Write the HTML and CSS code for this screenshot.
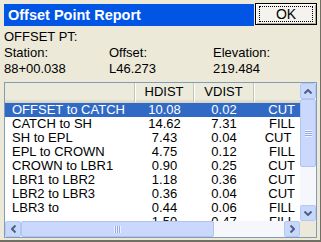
FILE: index.html
```html
<!DOCTYPE html>
<html lang="en">

<head>
    <meta charset="UTF-8">
    <title>Offset Point Report</title>
    <link rel="stylesheet" href="styles.css">
</head>

<body>
    <div class="dialog">
        <div class="top">
            <div class="title">Offset Point Report</div>
            <div class="ok-btn"><span class="focus">OK</span></div>
        </div>
        <div class="info">
            <div class="info-head">OFFSET PT:</div>
            <div>Station:</div>
            <div>Offset:</div>
            <div>Elevation:</div>
            <div>88+00.038</div>
            <div>L46.273</div>
            <div>219.484</div>
        </div>
        <div class="list">
            <div class="view">
                <div class="row head">
                    <div class="cell"></div>
                    <div class="cell">HDIST</div>
                    <div class="cell">VDIST</div>
                    <div class="cell"></div>
                </div>
                <div class="row selected">
                    <div class="cell name">OFFSET to CATCH</div>
                    <div class="cell">10.08</div>
                    <div class="cell">0.02</div>
                    <div class="cell kind">CUT</div>
                </div>
                <div class="row">
                    <div class="cell name">CATCH to SH</div>
                    <div class="cell">14.62</div>
                    <div class="cell">7.31</div>
                    <div class="cell kind">FILL</div>
                </div>
                <div class="row">
                    <div class="cell name">SH to EPL</div>
                    <div class="cell">7.43</div>
                    <div class="cell">0.04</div>
                    <div class="cell kind">CUT&nbsp;</div>
                </div>
                <div class="row">
                    <div class="cell name">EPL to CROWN</div>
                    <div class="cell">4.75</div>
                    <div class="cell">0.12</div>
                    <div class="cell kind">FILL</div>
                </div>
                <div class="row">
                    <div class="cell name">CROWN to LBR1</div>
                    <div class="cell">0.90</div>
                    <div class="cell">0.25</div>
                    <div class="cell kind">CUT</div>
                </div>
                <div class="row">
                    <div class="cell name">LBR1 to LBR2</div>
                    <div class="cell">1.18</div>
                    <div class="cell">0.36</div>
                    <div class="cell kind">CUT</div>
                </div>
                <div class="row">
                    <div class="cell name">LBR2 to LBR3</div>
                    <div class="cell">0.36</div>
                    <div class="cell">0.04</div>
                    <div class="cell kind">CUT</div>
                </div>
                <div class="row">
                    <div class="cell name">LBR3 to</div>
                    <div class="cell">0.44</div>
                    <div class="cell">0.06</div>
                    <div class="cell kind">FILL</div>
                </div>
                <div class="row">
                    <div class="cell name">.</div>
                    <div class="cell">1.50</div>
                    <div class="cell">0.47</div>
                    <div class="cell kind">FILL</div>
                </div>
            </div>
            <div class="vscroll">
                <div class="sbtn">
                    <svg width="8" height="5" viewBox="0 0 8 5"><path d="M0.5 4.5 L4 1 L7.5 4.5" fill="none" stroke="#4d6185" stroke-width="2"/></svg>
                </div>
                <div class="vthumb"><div class="grip-v"></div></div>
                <div class="vtrack"></div>
                <div class="sbtn">
                    <svg width="8" height="5" viewBox="0 0 8 5"><path d="M0.5 0.5 L4 4 L7.5 0.5" fill="none" stroke="#4d6185" stroke-width="2"/></svg>
                </div>
            </div>
            <div class="hscroll">
                <div class="sbtn">
                    <svg width="5" height="8" viewBox="0 0 5 8"><path d="M4.5 0.5 L1 4 L4.5 7.5" fill="none" stroke="#4d6185" stroke-width="2"/></svg>
                </div>
                <div class="hthumb"><div class="grip-h"></div></div>
                <div class="htrack"></div>
                <div class="sbtn">
                    <svg width="5" height="8" viewBox="0 0 5 8"><path d="M0.5 0.5 L4 4 L0.5 7.5" fill="none" stroke="#4d6185" stroke-width="2"/></svg>
                </div>
            </div>
            <div class="corner"></div>
        </div>
    </div>
</body>

</html>
```

FILE: styles.css
```css
* {
    box-sizing: border-box;
}

body {
    margin: 0;
    font-family: "Liberation Sans", Arial, sans-serif;
    font-size: 13px;
    color: #000;
}

.dialog {
    width: 321px;
    height: 242px;
    background: #ece9d8;
    border-right: 1px solid #716f64;
    border-bottom: 2px solid #716f64;
    padding: 3px 3px 0 4px;
    overflow: hidden;
}

.top {
    display: flex;
    gap: 1px;
}

.title {
    flex: 1;
    height: 22px;
    margin-top: 1px;
    padding-left: 4px;
    background: #0055e5;
    color: #fff;
    font-weight: bold;
    font-size: 14.5px;
    line-height: 22px;
}

.ok-btn {
    width: 62px;
    height: 22px;
    border: 1px solid #000;
    background: #f4f3ee;
    box-shadow: inset 1px 1px 0 #fff, inset -1px -1px 0 #aca899;
    padding: 2px 3px;
}

.focus {
    display: block;
    height: 100%;
    border: 1px dotted #000;
    text-align: center;
    font-size: 14px;
    line-height: 15px;
}

.info {
    display: grid;
    grid-template-columns: 105px 104px 1fr;
    line-height: 16px;
    margin-top: 3px;
}

.info-head {
    grid-column: 1 / 4;
}

.list {
    margin-top: 5px;
    width: 313px;
    height: 156px;
    border: 1px solid #7f9db9;
    background: #fff;
    display: grid;
    grid-template-columns: 1fr 16px;
    grid-template-rows: 1fr 16px;
}

.view {
    overflow: hidden;
}

.row {
    display: grid;
    grid-template-columns: 130px 59px 60px 47px;
    height: 14px;
    line-height: 14px;
    white-space: nowrap;
}

.row .cell {
    text-align: center;
    overflow: hidden;
}

.row .name {
    text-align: left;
    padding-left: 7px;
}

.row .kind {
    text-align: right;
    padding-right: 6px;
}

.row.selected {
    background: #316ac5;
    color: #fff;
}

.row.head {
    height: 20px;
    line-height: 18px;
    background: #ebeadb;
    border-bottom: 1px solid #d6d3ce;
    box-shadow: inset 0 -2px 0 #e2decd;
}

.row.head .cell {
    border-right: 1px solid #c7c5b2;
    box-shadow: 1px 0 0 #fff;
}

.vscroll {
    grid-row: 1;
    grid-column: 2;
    display: flex;
    flex-direction: column;
    background: #f5f7fc;
}

.hscroll {
    grid-row: 2;
    grid-column: 1;
    display: flex;
    background: #f5f7fc;
}

.corner {
    background: #ece9d8;
}

.sbtn {
    width: 16px;
    height: 16px;
    flex: none;
    display: flex;
    align-items: center;
    justify-content: center;
    background: #c8d8fb;
    border: 1px solid #b4c8f4;
    border-radius: 2px;
}

.vthumb {
    height: 68px;
    display: flex;
    align-items: center;
    justify-content: center;
    background: #c9d8fc;
    border: 1px solid #b0c4f1;
    border-radius: 2px;
}

.vtrack,
.htrack {
    flex: 1;
}

.hthumb {
    width: 193px;
    display: flex;
    align-items: center;
    justify-content: center;
    background: #c9d8fc;
    border: 1px solid #b0c4f1;
    border-radius: 2px;
}

.grip-v {
    width: 7px;
    height: 7px;
    background: repeating-linear-gradient(#eef3fe 0 1px, #8faaf0 1px 2px);
}

.grip-h {
    width: 7px;
    height: 7px;
    background: repeating-linear-gradient(90deg, #eef3fe 0 1px, #8faaf0 1px 2px);
}
```
